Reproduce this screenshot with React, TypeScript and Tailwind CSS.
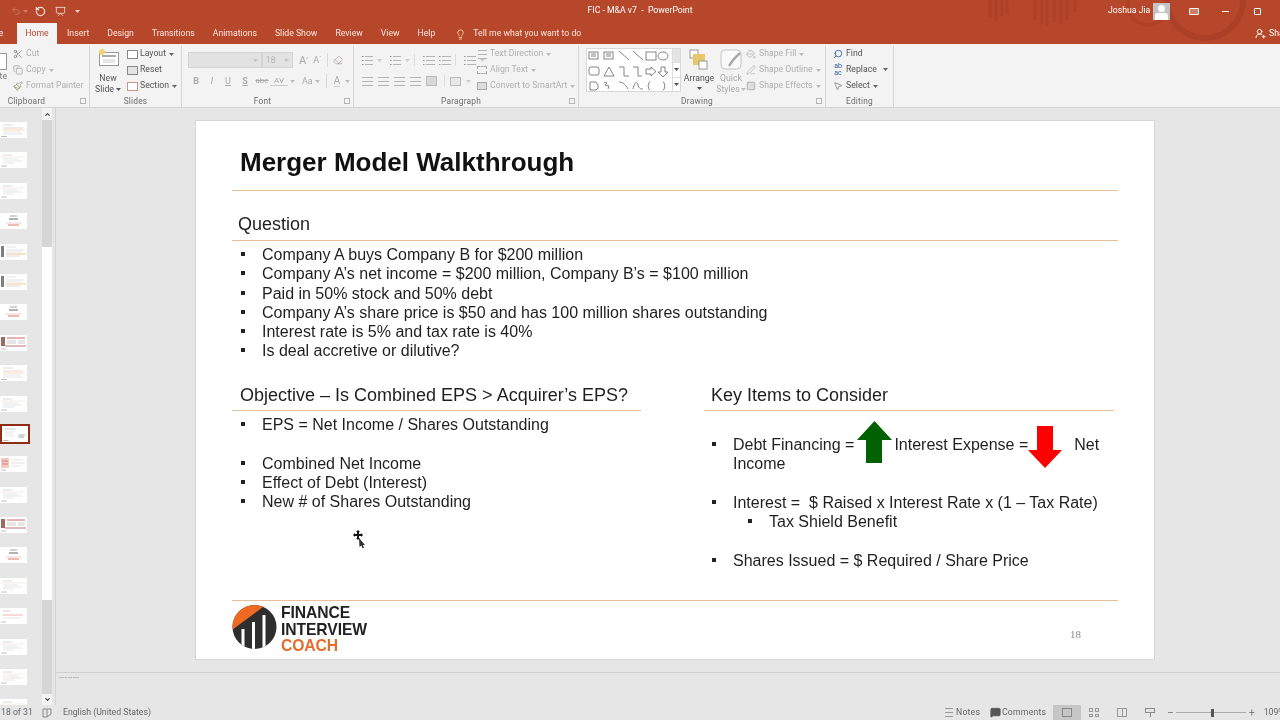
import React from "react";
import { Scissors, Copy, Paintbrush, Lightbulb, UserRoundPlus, Search, MousePointer2, Undo2, RotateCcw, Presentation, ChevronDown, ChevronUp, MessageSquare, Eraser, PaintBucket, PenLine, Square } from "lucide-react";

const Caret = ({ c = "#777" }: { c?: string }) => (
  <svg width="5" height="3" viewBox="0 0 5 3" className="shrink-0"><path d="M0 0h5L2.5 3z" fill={c} /></svg>
);

const Lines = ({ n = 3, w = 11, c = "#b5b5b5", dot = false }: { n?: number; w?: number; c?: string; dot?: boolean }) => (
  <svg width={w} height="9" viewBox={`0 0 ${w} 9`} className="shrink-0">
    {Array.from({ length: n }).map((_, i) => {
      const y = 0.5 + (i * 8) / (n - 1);
      return <path key={i} d={`M${dot ? 3 : 0} ${y}H${w}`} stroke={c} strokeWidth="1" />;
    })}
    {dot && [0.5, 4.5, 8.5].map((y) => <path key={y} d={`M0 ${y}H1.6`} stroke="#999" strokeWidth="1" />)}
  </svg>
);

const Group = ({ w, label, launcher, pad = "", children }: { w: string; label: string; launcher?: boolean; pad?: string; children: React.ReactNode }) => (
  <div className={`${w} h-full shrink-0 flex flex-col border-r border-[#d6d6d6]`}>
    <div className="h-[51px] flex">{children}</div>
    <div className={`relative h-[11px] flex items-center justify-center text-[8.4px] tracking-[0.2px] leading-none text-[#6e6e6e] ${pad}`}>
      {label}
      {launcher && <span className="absolute right-[3px] top-[2px] w-[6px] h-[6px] border border-[#b5b5b5]" />}
    </div>
  </div>
);

const TextRow = ({ icon, children, dim = true, caret = false }: { icon: React.ReactNode; children: React.ReactNode; dim?: boolean; caret?: boolean }) => (
  <div className={`h-[16px] flex items-center gap-[2px] text-[8.7px] whitespace-nowrap ${dim ? "text-[#b0b0b0]" : "text-[#555]"}`}>
    <span className="w-[12px] flex justify-center shrink-0">{icon}</span>
    <span>{children}</span>
    {caret && <span className="ml-[1px]"><Caret c={dim ? "#bbb" : "#666"} /></span>}
  </div>
);

const Thumb = ({ kind, selected }: { kind: string; selected?: boolean }) => {
  const box = selected ? "w-[30px] h-[20px] border-2 border-[#8f2c16] -my-[2px]" : "w-[27px] h-[16px]";
  return (
    <div className={`${box} bg-white shrink-0 overflow-hidden`}>
      <svg width="100%" height="100%" viewBox="0 0 27 16" preserveAspectRatio="none" opacity=".75">
        {kind === "text" && (
          <g>
            <path d="M3 3h9" stroke="#bbb" strokeWidth=".7" />
            <path d="M1 5h25" stroke="#f0d8c4" strokeWidth=".6" />
            <path d="M3 7h15M3 9h19M3 11h11" stroke="#d0d0d0" strokeWidth=".7" />
            <path d="M1 14h6" stroke="#aaa" strokeWidth="1" />
          </g>
        )}
        {kind === "lined" && (
          <g>
            <path d="M3 3h10" stroke="#bbb" strokeWidth=".7" />
            <path d="M3 6h20" stroke="#d8b8b0" strokeWidth=".8" />
            <path d="M3 8h22" stroke="#f0c8a0" strokeWidth=".9" />
            <path d="M3 10h18M3 12h20" stroke="#d4d4d4" strokeWidth=".7" />
            <path d="M1 14.5h6" stroke="#aaa" strokeWidth="1" />
          </g>
        )}
        {kind === "logo" && (
          <g>
            <path d="M10 3h7" stroke="#999" strokeWidth="1.2" />
            <path d="M9 6h9" stroke="#555" strokeWidth="1.2" />
            <path d="M6 10h15" stroke="#d8a8a0" strokeWidth=".7" />
            <path d="M8 12h11" stroke="#dd6655" strokeWidth="1.2" />
          </g>
        )}
        {kind === "stripe" && (
          <g>
            <rect x="1" y="2" width="3" height="11" fill="#555" />
            <path d="M6 3h10M6 6h18M6 8h16" stroke="#ccc" strokeWidth=".7" />
            <path d="M6 10h20" stroke="#f0c090" strokeWidth="1.2" />
            <path d="M6 12h14" stroke="#bbb" strokeWidth=".7" />
          </g>
        )}
        {kind === "heavy" && (
          <g>
            <rect x="1" y="2" width="4" height="9" fill="#7a3a30" />
            <path d="M7 3h18" stroke="#b33" strokeWidth="1" />
            <path d="M7 6h9M18 6h7M7 8h9M18 8h7" stroke="#aaa" strokeWidth=".8" />
            <path d="M5 11h21" stroke="#a44" strokeWidth="1" />
            <path d="M1 14h5" stroke="#aaa" strokeWidth="1" />
          </g>
        )}
        {kind === "sel" && (
          <g>
            <path d="M3 3h11" stroke="#999" strokeWidth=".7" />
            <path d="M3 6h10M3 8h8M3 10h10" stroke="#ccc" strokeWidth=".7" />
            <path d="M17 9h7" stroke="#7799bb" strokeWidth="1" />
            <path d="M17 11h6" stroke="#bb6666" strokeWidth="1" />
            <path d="M1 14.5h6" stroke="#aaa" strokeWidth="1" />
          </g>
        )}
        {kind === "red" && (
          <g>
            <rect x="1" y="2" width="8" height="10" fill="#f0b8b0" />
            <path d="M2 5h6M2 8h6" stroke="#c55" strokeWidth="1" />
            <path d="M11 4h12M11 7h14M11 10h10" stroke="#ccc" strokeWidth=".7" />
            <path d="M1 14h5" stroke="#aaa" strokeWidth="1" />
          </g>
        )}
        {kind === "mid" && (
          <g>
            <path d="M3 3h8" stroke="#aaa" strokeWidth=".7" />
            <path d="M3 7h20" stroke="#e88" strokeWidth=".9" />
            <path d="M3 10h18" stroke="#ccc" strokeWidth=".7" />
            <path d="M1 14h5" stroke="#aaa" strokeWidth="1" />
          </g>
        )}
      </svg>
    </div>
  );
};

const thumbs = ["lined", "text", "text", "logo", "stripe", "stripe", "logo", "heavy", "lined", "text", "sel", "red", "text", "heavy", "logo", "text", "mid", "text", "text", "text"];

const Shapes = () => (
  <svg width="85" height="43" viewBox="0 0 85 43" className="shrink-0" fill="none" stroke="#666" strokeWidth=".8">
    <rect x="2" y="3" width="9" height="7" /><path d="M4 5h5M4 7h5" />
    <rect x="17" y="3" width="9" height="7" /><path d="M19 5h5M19 7h5" />
    <path d="M32 2l10 9M46 2l10 9" />
    <rect x="59" y="3" width="10" height="8" />
    <ellipse cx="76" cy="7" rx="5" ry="4" />
    <rect x="2" y="18" width="10" height="8" rx="2" />
    <path d="M17 27l5-9 5 9z" />
    <path d="M32 18h5v9h5M46 18h5v9h4" />
    <path d="M59 20h5v-2l5 4.500-5 4.500v-2h-5z" />
    <path d="M74 18h4v5h3l-5 5-5-5h3z" />
    <path d="M3 33h6l2 3v3l-2 2H3z" />
    <path d="M17 33l3 1-2 2 4 1-1 3" />
    <path d="M32 33c4 0 7 3 9 7M46 40c2-8 4-8 5-4s3 4 5 4" />
    <path d="M63 33c-2 0-1 3-2 4 1 1 0 4 2 4M76 33c2 0 1 3 2 4-1 1 0 4-2 4" />
  </svg>
);

const Ribbon = () => (
  <div className="h-[64px] shrink-0 flex bg-[#f3f3f3] border-b border-[#d4d4d4] pt-[2px] text-[#666]">
    {/* Clipboard */}
    <Group w="w-[90px]" label="Clipboard" launcher pad="pr-[36px]">
      <div className="w-[7px] overflow-hidden flex flex-col items-end text-[8.7px] text-[#777]">
        <div className="w-[14px] h-[17px] mt-[7px] bg-white border border-[#999] shrink-0" />
        <span className="mt-[2px] leading-none">ste</span>
      </div>
      <div className="pl-[5px]">
        <TextRow icon={<Scissors size={10} color="#8a8a8a" />}>Cut</TextRow>
        <TextRow icon={<Copy size={10} color="#aaa" />} caret>Copy</TextRow>
        <TextRow icon={<Paintbrush size={10} color="#9a9a7a" />}>Format Painter</TextRow>
      </div>
    </Group>
    {/* Slides */}
    <Group w="w-[92px]" label="Slides">
      <div className="w-[36px] flex flex-col items-center text-[8.7px] leading-[11px] text-[#555]">
        <svg width="21" height="18" viewBox="0 0 21 18" className="mt-[3px] mb-[6px]">
          <rect x="1.500" y="3.500" width="19" height="13" fill="#fff" stroke="#999" />
          <path d="M4 7h14" stroke="#aaa" strokeWidth="2" />
          <path d="M5 11h12M5 13h12" stroke="#ccc" />
          <circle cx="4" cy="3" r="3" fill="#f3d27a" />
        </svg>
        <span>New</span>
        <span className="flex items-center gap-[2px]">Slide <Caret c="#555" /></span>
      </div>
      <div>
        <TextRow dim={false} caret icon={<span className="w-[11px] h-[9px] border border-[#888] bg-white block" />}>Layout</TextRow>
        <TextRow dim={false} icon={<span className="w-[11px] h-[9px] border border-[#888] bg-[#e4e4e4] block" />}>Reset</TextRow>
        <TextRow dim={false} caret icon={<span className="w-[11px] h-[9px] border border-[#c98] bg-white block" />}>Section</TextRow>
      </div>
    </Group>
    {/* Font */}
    <Group w="w-[172px]" label="Font" launcher pad="pr-[10px]">
      <div className="flex flex-col pl-[6px] pt-[6px] gap-[3px]">
        <div className="flex items-center h-[16px]">
          <div className="w-[74px] h-[16px] bg-[#e2e2e2] border border-[#d4d4d4] flex items-center justify-end pr-[3px]"><Caret c="#c4c4c4" /></div>
          <div className="w-[31px] h-[16px] bg-[#e2e2e2] border border-[#d4d4d4] flex items-center justify-between px-[3px] text-[8.5px] text-[#b5b5b5]">18<Caret c="#c4c4c4" /></div>
          <span className="ml-[6px] text-[11px] text-[#aaa] leading-none">A<sup className="text-[5px]">^</sup></span>
          <span className="ml-[5px] text-[9px] text-[#aaa] leading-none">A<sup className="text-[5px]">ˇ</sup></span>
          <span className="ml-[6px] h-[14px] border-l border-[#d8d8d8]" />
          <Eraser size={10} color="#b5a8a8" className="ml-[5px]" />
        </div>
        <div className="flex items-center h-[20px] text-[9px] text-[#aaa] leading-none">
          <span className="w-[16px] text-center font-bold">B</span>
          <span className="w-[16px] text-center italic">I</span>
          <span className="w-[16px] text-center underline">U</span>
          <span className="w-[18px] text-center font-bold underline">S</span>
          <span className="w-[16px] text-center line-through text-[8px]">abc</span>
          <span className="w-[18px] text-center text-[8px] border-b border-[#ccc] leading-[8px]">AV</span>
          <span className="ml-[2px]"><Caret c="#bbb" /></span>
          <span className="ml-[7px]">Aa</span><span className="ml-[2px]"><Caret c="#bbb" /></span>
          <span className="ml-[6px] h-[14px] border-l border-[#d8d8d8]" />
          <span className="ml-[7px] text-[10px] border-b border-[#ccc]">A</span>
          <span className="ml-[5px]"><Caret c="#bbb" /></span>
        </div>
      </div>
    </Group>
    {/* Paragraph */}
    <Group w="w-[225px]" label="Paragraph" launcher pad="pr-[10px]">
      <div className="flex flex-col pl-[8px] pt-[6px] gap-[3px] w-[122px] shrink-0">
        <div className="flex items-center h-[16px] gap-[4px]">
          <Lines dot /><Caret c="#ccc" /><span className="w-[4px]" />
          <Lines dot /><Caret c="#ccc" /><span className="w-[4px] border-r border-[#ddd] h-[12px]" /><span className="w-[1px]" />
          <Lines dot w={12} /><Lines dot w={12} /><span className="w-[3px] border-r border-[#ddd] h-[12px]" /><span className="w-[2px]" />
          <Lines dot w={12} /><Caret c="#ccc" />
        </div>
        <div className="flex items-center h-[20px] gap-[5px]">
          <Lines /><Lines /><Lines /><Lines />
          <span className="w-[11px] h-[10px] bg-[#d8d8d8] border border-[#bbb]" />
          <span className="w-[3px] border-r border-[#ddd] h-[12px]" />
          <span className="w-[11px] h-[9px] border border-[#bbb] bg-[#e8e8e8]" /><Caret c="#ccc" />
        </div>
      </div>
      <div>
        <TextRow caret icon={<Lines n={3} w={9} />}>Text Direction</TextRow>
        <TextRow caret icon={<span className="w-[10px] h-[8px] border border-dashed border-[#aaa] block" />}>Align Text</TextRow>
        <TextRow caret icon={<span className="w-[10px] h-[8px] border border-[#aaa] bg-[#ddd] block" />}>Convert to SmartArt</TextRow>
      </div>
    </Group>
    {/* Drawing */}
    <Group w="w-[247px]" label="Drawing" launcher pad="pr-[10px]">
      <div className="flex pl-[7px]">
        <div className="w-[95px] h-[44px] mt-[2px] bg-white border border-[#d8d8d8] flex shrink-0">
          <Shapes />
          <div className="w-[9px] flex flex-col border-l border-[#ddd]">
            <div className="flex-1 flex items-center justify-center bg-[#e4e4e4]"><Caret c="#e4e4e4" /></div>
            <div className="flex-1 flex items-center justify-center border-y border-[#ddd]"><Caret c="#555" /></div>
            <div className="flex-1 flex items-center justify-center"><Caret c="#555" /></div>
          </div>
        </div>
        <div className="w-[36px] flex flex-col items-center text-[8.7px] leading-[11px] text-[#555]">
          <svg width="20" height="21" viewBox="0 0 20 21" className="mt-[3px] mb-[3px]">
            <rect x="1" y="1" width="8" height="8" fill="#fff" stroke="#999" />
            <rect x="4" y="5" width="12" height="11" fill="#e8c76a" />
            <rect x="10" y="12" width="8" height="8" fill="#fff" stroke="#999" />
          </svg>
          <span>Arrange</span>
          <span className="mt-[3px]"><Caret c="#555" /></span>
        </div>
        <div className="w-[28px] flex flex-col items-center text-[8.7px] leading-[11px] text-[#aaa]">
          <svg width="22" height="21" viewBox="0 0 22 21" className="mt-[3px] mb-[3px] shrink-0">
            <rect x="1" y="1" width="20" height="19" rx="4" fill="#fafafa" stroke="#c4c4c4" />
            <path d="M9 17l4-6 7-7" stroke="#aaa" strokeWidth="2.500" fill="none" />
          </svg>
          <span>Quick</span>
          <span className="flex items-center gap-[1px]">Styles<Caret c="#bbb" /></span>
        </div>
        <div>
          <TextRow caret icon={<PaintBucket size={10} color="#bbb" />}>Shape Fill</TextRow>
          <TextRow caret icon={<PenLine size={10} color="#bbb" />}>Shape Outline</TextRow>
          <TextRow caret icon={<Square size={10} color="#aaa" fill="#ddd" />}>Shape Effects</TextRow>
        </div>
      </div>
    </Group>
    {/* Editing */}
    <Group w="w-[68px]" label="Editing">
      <div className="pl-[6px] w-full">
        <TextRow dim={false} icon={<Search size={10} color="#2b5e9e" className="-scale-x-100" />}>Find</TextRow>
        <TextRow dim={false} icon={<span className="text-[7px] leading-[7px] text-[#2b5e9e]">ab<br />ac</span>}>
          <span className="flex items-center gap-[6px]">Replace <Caret c="#666" /></span>
        </TextRow>
        <TextRow dim={false} caret icon={<MousePointer2 size={10} color="#888" />}>Select</TextRow>
      </div>
    </Group>
  </div>
);

const TitleBar = () => (
  <div className="relative h-[44px] shrink-0 bg-[#b7472a] text-white overflow-hidden">
    <svg className="absolute left-[985px] top-0" width="295" height="44" viewBox="0 0 295 44" fill="none" stroke="#a83f25">
      <circle cx="220" cy="0" r="38" strokeWidth="6" opacity=".8" />
      <circle cx="163" cy="5" r="20" strokeWidth="4" opacity=".6" />
      <path d="M5 0v18M11 0v21M17 0v16M22 0v13M50 0v20M57 0v24M62 0v26M69 0v22M76 0v24M82 0v20M90 0v12" strokeWidth="3" opacity=".7" />
    </svg>
    <div className="relative h-[22px] flex items-center">
      <div className="flex items-center w-[90px]">
        <Undo2 size={10} color="#cc7a62" className="ml-[11px]" />
        <span className="ml-[2px]"><Caret c="#cc7a62" /></span>
        <RotateCcw size={11} strokeWidth={2.8} color="#f6dcd4" className="ml-[7px]" />
        <Presentation size={11} color="#f0cfc4" className="ml-[9px]" />
        <span className="ml-[9px]"><Caret c="#f0cfc4" /></span>
      </div>
      <div className="ml-[497px] w-[106px] text-center text-[8.7px] whitespace-pre">FIC - M&amp;A v7  -  PowerPoint</div>
      <div className="ml-[415px] w-[45px] text-[8.7px] whitespace-nowrap">Joshua Jia</div>
      <div className="w-[17px] h-[17px] bg-[#c4c4c4] flex flex-col items-center overflow-hidden">
        <span className="w-[7px] h-[7px] rounded-full bg-white mt-[2px] shrink-0" />
        <span className="w-[13px] h-[7px] rounded-t-[3px] bg-white mt-[1px] shrink-0" />
      </div>
      <span className="ml-[19px] w-[10px] h-[7px] border border-white bg-white/30 rounded-[1px]" />
      <span className="ml-[23px] w-[7px] h-0 border-t border-white" />
      <span className="ml-[25px] w-[7px] h-[7px] border border-white rounded-[1px]" />
    </div>
    <div className="relative h-[22px] flex items-end text-[8.7px]">
      <span className="w-[17px] -ml-[8px] h-[20px] flex items-center justify-end pr-[6px]">File</span>
      <div className="ml-[8px] w-[40px] h-[21px] bg-[#f3f3f3] text-[#b7472a] flex items-center justify-center pt-[1px]">Home</div>
      <nav className="flex h-[21px] pt-[1px] items-center whitespace-nowrap text-[#fbe4dc]">
        <span className="ml-[10px]">Insert</span>
        <span className="ml-[18px]">Design</span>
        <span className="ml-[18px]">Transitions</span>
        <span className="ml-[18px]">Animations</span>
        <span className="ml-[18px]">Slide Show</span>
        <span className="ml-[18px]">Review</span>
        <span className="ml-[18px]">View</span>
        <span className="ml-[18px]">Help</span>
        <Lightbulb size={11} color="#f6d9a8" className="ml-[20px]" />
        <span className="ml-[7px]">Tell me what you want to do</span>
      </nav>
      <div className="flex-1" />
      <div className="h-[21px] flex items-center gap-[3px] w-[25px] whitespace-nowrap">
        <UserRoundPlus size={11} color="#fff" className="shrink-0" /><span>Share</span>
      </div>
    </div>
  </div>
);

const Bullet = ({ children, indent = "pl-[30px]", dot = "left-[9px]" }: { children: React.ReactNode; indent?: string; dot?: string }) => (
  <li className={`relative ${indent} leading-[19.25px]`}>
    <span className={`absolute ${dot} top-[7px] w-[4px] h-[4px] bg-[#222]`} />
    {children}
  </li>
);

const Logo = () => (
  <div className="flex items-start">
    <svg width="45" height="46" viewBox="0 0 45 46" className="shrink-0">
      <defs><clipPath id="logoc"><circle cx="22.500" cy="23" r="22" /></clipPath></defs>
      <g clipPath="url(#logoc)">
        <rect width="45" height="46" fill="#2e2e2e" />
        <path d="M0 0H35L0 26z" fill="#ee6a22" />
        <path d="M9.500 25v21h3V25zM20 18v28h3V18zM30.500 11v35h3V11z" fill="#fff" />
      </g>
    </svg>
    <div className="ml-[4px] mt-[1px] font-bold text-[15.700px] leading-[16.500px] text-[#222] tracking-[-0.1px]">
      <div>FINANCE</div>
      <div>INTERVIEW</div>
      <div className="text-[#e06f2d]">COACH</div>
    </div>
  </div>
);

const Slide = () => (
  <div className="relative w-[960px] h-[540px] shrink-0 bg-white border border-[#d6d6d6] px-[36px] flex flex-col text-[#1f1f1f] font-['Liberation_Sans',Arial,sans-serif]">
    <div className="h-[70px] shrink-0 border-b border-[#e8c098] pl-[8px] pt-[26px] text-[26px] leading-[30px] font-bold text-[#111]">Merger Model Walkthrough</div>
    <div className="h-[50px] shrink-0 border-b border-[#e8c098] pl-[6px] pt-[23px] text-[18px] leading-[20px]">Question</div>
    <ul className="pt-[4px] text-[16px] h-[125px] shrink-0">
      <Bullet>Company A buys Company B for $200 million</Bullet>
      <Bullet>Company A’s net income = $200 million, Company B’s = $100 million</Bullet>
      <Bullet>Paid in 50% stock and 50% debt</Bullet>
      <Bullet>Company A’s share price is $50 and has 100 million shares outstanding</Bullet>
      <Bullet>Interest rate is 5% and tax rate is 40%</Bullet>
      <Bullet>Is deal accretive or dilutive?</Bullet>
    </ul>
    <div className="flex h-[235px] shrink-0 border-b border-[#e8c098]">
      <div className="w-[409px] shrink-0">
        <div className="h-[45px] border-b border-[#e8c098] pl-[8px] pt-[19px] text-[18px] leading-[20px]">Objective – Is Combined EPS &gt; Acquirer’s EPS?</div>
        <ul className="pt-[4px] text-[16px]">
          <Bullet>EPS = Net Income / Shares Outstanding</Bullet>
          <li className="h-[19.250px]" />
          <Bullet>Combined Net Income</Bullet>
          <Bullet>Effect of Debt (Interest)</Bullet>
          <Bullet>New # of Shares Outstanding</Bullet>
        </ul>
      </div>
      <div className="ml-[63px] w-[410px] shrink-0">
        <div className="h-[45px] border-b border-[#e8c098] pl-[7px] pt-[19px] text-[18px] leading-[20px]">Key Items to Consider</div>
        <ul className="pt-[24px] text-[16px]">
          <Bullet indent="pl-[29px]" dot="left-[8px]">
            Debt Financing =
            <span className="relative inline-block w-[40px] h-0 align-baseline">
              <svg className="absolute left-[3px] -top-[29px]" width="35" height="42" viewBox="0 0 35 42">
                <path d="M17.500 0L35 19H25V42H9V19H0z" fill="#006100" />
              </svg>
            </span>
            Interest Expense =
            <span className="relative inline-block w-[46px] h-0 align-baseline">
              <svg className="absolute left-0 -top-[24px]" width="34" height="42" viewBox="0 0 34 42">
                <path d="M9 0H25V24H34L17 42L0 24H9z" fill="#ff0000" />
              </svg>
            </span>
            Net Income
          </Bullet>
          <li className="h-[19.250px]" />
          <Bullet indent="pl-[29px]" dot="left-[8px]">Interest =&nbsp; $ Raised x Interest Rate x (1 – Tax Rate)</Bullet>
          <Bullet indent="pl-[65px]" dot="left-[44px]">Tax Shield Benefit</Bullet>
          <li className="h-[19.250px]" />
          <Bullet indent="pl-[29px]" dot="left-[8px]">Shares Issued = $ Required / Share Price</Bullet>
        </ul>
      </div>
    </div>
    <div className="flex-1 flex items-start justify-between pt-[3px]">
      <Logo />
      <span className="mt-[23px] mr-[37px] text-[11px] leading-[14px] text-[#8a8a8a] font-['Liberation_Serif',serif]">18</span>
    </div>
    <svg className="absolute left-[156px] top-[409px]" width="14" height="18" viewBox="0 0 14 18" fill="#111">
      <path d="M6 0l2 2H7v2h2V3l2 2-2 2V6H7v2h1L6 10 4 8h1V6H3v1L1 5l2-2v1h2V2H4z" />
      <path d="M7 8l6 7-2 0 1 3-1.500.5-1-3-2 1.500z" fill="#333" />
    </svg>
  </div>
);

const StatusBar = () => (
  <div className="h-[15px] shrink-0 flex items-center bg-[#e6e6e6] text-[8.700px] text-[#666] whitespace-nowrap">
    <span className="ml-[1px] w-[30px] shrink-0">18 of 31</span>
    <svg width="10" height="10" viewBox="0 0 10 10" className="ml-[11px] shrink-0" fill="none" stroke="#888"><path d="M1 1h4v8H1zM5 1h4v5L5 9" /></svg>
    <span className="ml-[11px] w-[80px] shrink-0">English (United States)</span>
    <div className="ml-[802px] flex items-center shrink-0">
      <Lines n={3} w={8} c="#999" />
      <span className="ml-[3px] w-[22px] tracking-[0.2px]">Notes</span>
    </div>
    <MessageSquare size={11} color="#555" fill="#555" className="ml-[12px] shrink-0" />
    <span className="ml-[1px] w-[38px] tracking-[0.2px] shrink-0">Comments</span>
    <div className="ml-[13px] w-[28px] h-[15px] bg-[#c6c6c6] flex items-center justify-center shrink-0">
      <span className="w-[10px] h-[9px] border border-[#888]" />
    </div>
    <span className="ml-[8px] w-[10px] h-[9px] grid grid-cols-2 gap-[2px] shrink-0">
      <i className="border border-[#999]" /><i className="border border-[#999]" /><i className="border border-[#999]" /><i className="border border-[#999]" />
    </span>
    <span className="ml-[18px] w-[10px] h-[9px] border border-[#999] flex justify-center shrink-0"><i className="w-0 border-l border-[#999]" /></span>
    <span className="ml-[18px] w-[10px] h-[9px] flex flex-col items-center shrink-0">
      <i className="w-full h-[5px] border border-[#888]" /><i className="w-[1px] h-[4px] bg-[#888]" />
    </span>
    <span className="ml-[13px] w-[5px] border-t border-[#888] shrink-0" />
    <div className="ml-[3px] w-[70px] h-[9px] flex items-center justify-center relative shrink-0">
      <span className="w-full border-t border-[#aaa]" />
      <span className="absolute left-[35px] w-[3px] h-[8px] bg-[#555]" />
    </div>
    <span className="ml-[3px] text-[10px] leading-none text-[#777]">+</span>
    <span className="ml-[9px]">109%</span>
  </div>
);

export default function App() {
  return (
    <div className="w-[1280px] h-[720px] overflow-hidden flex flex-col bg-[#e6e6e6] font-['Roboto','Open_Sans',sans-serif] blur-[0.4px]">
      <TitleBar />
      <Ribbon />
      <div className="flex-1 min-h-0 flex">
        <div className="w-[42px] shrink-0 overflow-hidden flex flex-col items-start gap-[14.400px] pt-[14px]">
          {thumbs.map((k, i) => <Thumb key={i} kind={k} selected={k === "sel"} />)}
        </div>
        <div className="w-[10px] shrink-0 flex flex-col bg-[#d6d6d6]">
          <div className="h-[12px] shrink-0 bg-[#f3f3f3] flex items-center justify-center"><ChevronUp size={7} color="#444" strokeWidth={4} /></div>
          <div className="h-[127px] shrink-0" />
          <div className="h-[353px] shrink-0 bg-white" />
          <div className="flex-1" />
          <div className="h-[11px] shrink-0 bg-[#f3f3f3] flex items-center justify-center"><ChevronDown size={7} color="#444" strokeWidth={4} /></div>
        </div>
        <div className="flex-1 min-w-0 ml-[3px] border-l border-[#d4d4d4] flex flex-col">
          <div className="h-[564px] shrink-0 pt-[12px] pl-[139px]">
            <Slide />
          </div>
          <div className="flex-1 border-t border-[#d0d0d0] pl-[3px] pt-[3px]">
            <div className="text-[2.500px] leading-[3px] text-[#888]">Click to add notes</div>
          </div>
        </div>
      </div>
      <StatusBar />
    </div>
  );
}
